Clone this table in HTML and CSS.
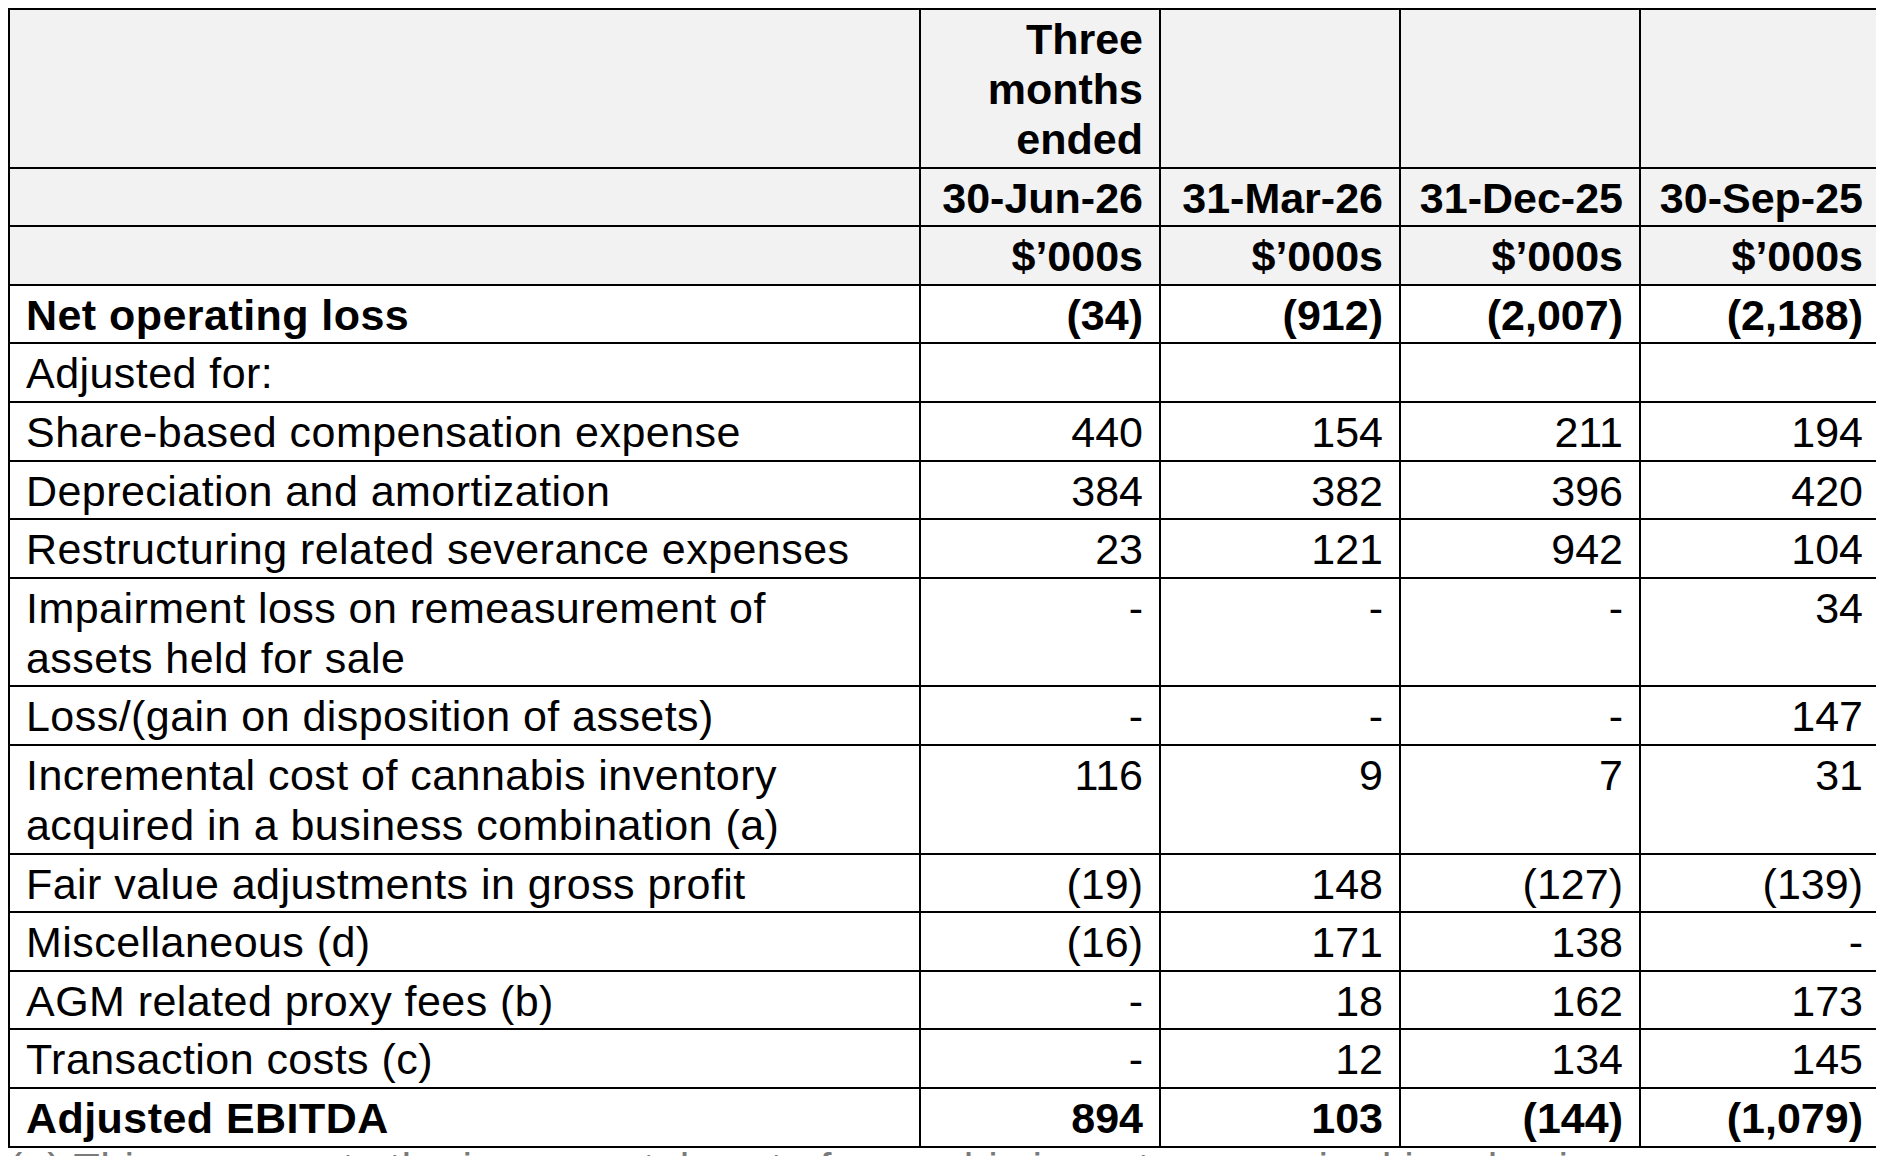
FILE: index.html
```html
<!DOCTYPE html>
<html lang="en">
<head>
<meta charset="utf-8">
<title>Adjusted EBITDA reconciliation</title>
<link rel="stylesheet" href="styles.css">
</head>
<body>
<table class="recon">
  <colgroup>
    <col class="col-label">
    <col class="col-val">
    <col class="col-val">
    <col class="col-val">
    <col class="col-val">
  </colgroup>
  <thead>
    <tr class="head">
      <th class="label"></th>
      <th class="num">Three months ended</th>
      <th class="num"></th>
      <th class="num"></th>
      <th class="num"></th>
    </tr>
    <tr class="head">
      <th class="label"></th>
      <th class="num">30-Jun-26</th>
      <th class="num">31-Mar-26</th>
      <th class="num">31-Dec-25</th>
      <th class="num">30-Sep-25</th>
    </tr>
    <tr class="head">
      <th class="label"></th>
      <th class="num">$’000s</th>
      <th class="num">$’000s</th>
      <th class="num">$’000s</th>
      <th class="num">$’000s</th>
    </tr>
  </thead>
  <tbody>
    <tr class="strong">
      <td class="label">Net operating loss</td>
      <td class="num">(34)</td>
      <td class="num">(912)</td>
      <td class="num">(2,007)</td>
      <td class="num">(2,188)</td>
    </tr>
    <tr>
      <td class="label">Adjusted for:</td>
      <td class="num"></td>
      <td class="num"></td>
      <td class="num"></td>
      <td class="num"></td>
    </tr>
    <tr>
      <td class="label">Share-based compensation expense</td>
      <td class="num">440</td>
      <td class="num">154</td>
      <td class="num">211</td>
      <td class="num">194</td>
    </tr>
    <tr>
      <td class="label">Depreciation and amortization</td>
      <td class="num">384</td>
      <td class="num">382</td>
      <td class="num">396</td>
      <td class="num">420</td>
    </tr>
    <tr>
      <td class="label">Restructuring related severance expenses</td>
      <td class="num">23</td>
      <td class="num">121</td>
      <td class="num">942</td>
      <td class="num">104</td>
    </tr>
    <tr>
      <td class="label">Impairment loss on remeasurement of<br>assets held for sale</td>
      <td class="num">-</td>
      <td class="num">-</td>
      <td class="num">-</td>
      <td class="num">34</td>
    </tr>
    <tr>
      <td class="label">Loss/(gain on disposition of assets)</td>
      <td class="num">-</td>
      <td class="num">-</td>
      <td class="num">-</td>
      <td class="num">147</td>
    </tr>
    <tr>
      <td class="label">Incremental cost of cannabis inventory<br>acquired in a business combination (a)</td>
      <td class="num">116</td>
      <td class="num">9</td>
      <td class="num">7</td>
      <td class="num">31</td>
    </tr>
    <tr>
      <td class="label">Fair value adjustments in gross profit</td>
      <td class="num">(19)</td>
      <td class="num">148</td>
      <td class="num">(127)</td>
      <td class="num">(139)</td>
    </tr>
    <tr>
      <td class="label">Miscellaneous (d)</td>
      <td class="num">(16)</td>
      <td class="num">171</td>
      <td class="num">138</td>
      <td class="num">-</td>
    </tr>
    <tr>
      <td class="label">AGM related proxy fees (b)</td>
      <td class="num">-</td>
      <td class="num">18</td>
      <td class="num">162</td>
      <td class="num">173</td>
    </tr>
    <tr>
      <td class="label">Transaction costs (c)</td>
      <td class="num">-</td>
      <td class="num">12</td>
      <td class="num">134</td>
      <td class="num">145</td>
    </tr>
    <tr class="strong">
      <td class="label">Adjusted EBITDA</td>
      <td class="num">894</td>
      <td class="num">103</td>
      <td class="num">(144)</td>
      <td class="num">(1,079)</td>
    </tr>
  </tbody>
</table>
<p class="footnote">(a) This represents the incremental cost of cannabis inventory acquired in a business combination.</p>
</body>
</html>
```

FILE: styles.css
```css
html, body {
  background: #ffffff;
}

body {
  margin: 8px;
  font-family: "Liberation Sans", Arial, Helvetica, sans-serif;
  font-size: 43px;
  line-height: 50px;
  color: #000000;
  overflow: hidden;
}

.recon {
  width: 1873px;
  table-layout: fixed;
  border-collapse: collapse;
  border: 2px solid #000000;
}

.col-label {
  width: 911px;
}

.col-val {
  width: 240px;
}

.recon th,
.recon td {
  border: 2px solid #000000;
  padding: 4px 16px 2.6px 16px;
  vertical-align: top;
  font-weight: normal;
}

.recon th {
  font-weight: bold;
}

.recon .label {
  text-align: left;
  letter-spacing: 0.45px;
}

.recon .num {
  text-align: right;
}

.head th {
  background: #f2f2f2;
}

.strong td {
  font-weight: bold;
}

.footnote {
  margin: 0;
  line-height: 40px;
  color: #7a7a7a;
  letter-spacing: 0.45px;
}
```
